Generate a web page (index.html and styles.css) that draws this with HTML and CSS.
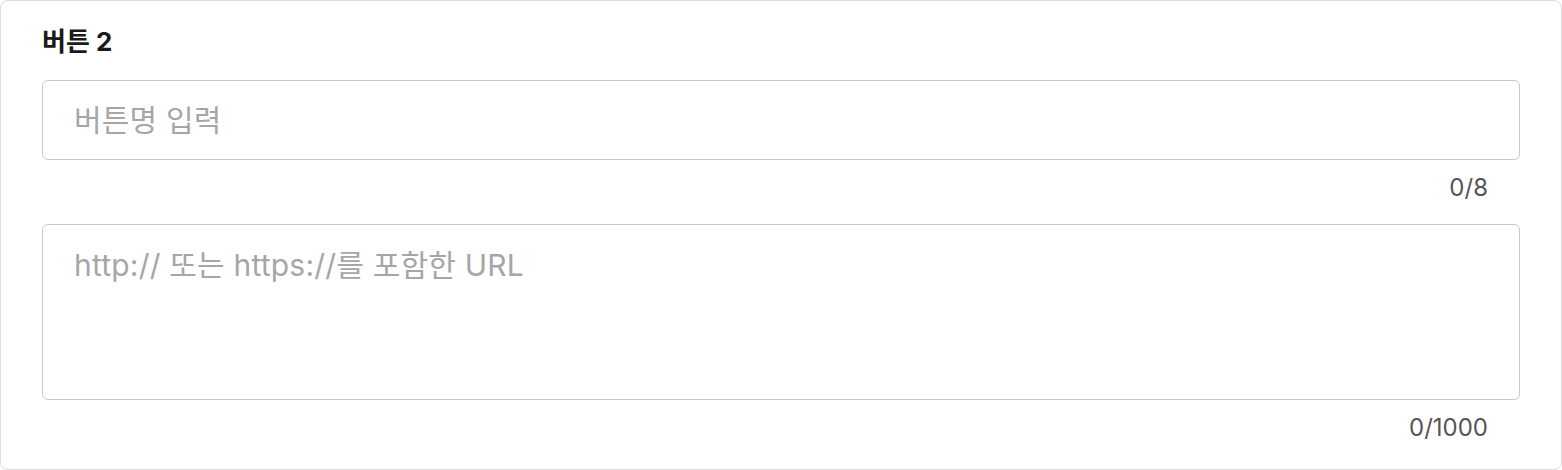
FILE: index.html
```html
<!DOCTYPE html>
<html lang="ko">
<head>
<meta charset="utf-8">
<link rel="stylesheet" href="styles.css">
</head>
<body>
<div class="card">
  <div class="title">버튼 2</div>
  <input class="field" type="text" placeholder="버튼명 입력">
  <div class="counter">0/8</div>
  <textarea class="field area" placeholder="http:// 또는 https://를 포함한 URL"></textarea>
  <div class="counter">0/1000</div>
</div>
</body>
</html>
```

FILE: styles.css
```css
html, body {
  margin: 0;
  padding: 0;
  background: #fff;
}
body {
  font-family: Inter, "Noto Sans CJK KR", sans-serif;
}
.card {
  box-sizing: border-box;
  width: 1562px;
  height: 470px;
  border: 1px solid #dcdcdc;
  border-radius: 8px;
  padding: 25px 41px 0 41px;
  display: flex;
  flex-direction: column;
}
.title {
  font-size: 26px;
  font-weight: 700;
  line-height: 32px;
  color: #1a1a1a;
}
.field {
  box-sizing: border-box;
  width: 100%;
  margin: 22px 0 0 0;
  border: 1.5px solid #c8c8c8;
  border-radius: 6px;
  background: #fff;
  font-family: Inter, "Noto Sans CJK KR", sans-serif;
  font-size: 30px;
  color: #222;
  padding: 0 31px;
  outline: none;
  letter-spacing: 0.2px;
}
input.field {
  height: 80px;
  line-height: 40px;
}
.area {
  height: 176px;
  resize: none;
  padding-top: 20px;
  line-height: 40px;
  display: block;
}
.field::placeholder {
  color: #a6a6a6;
}
.counter {
  margin-top: 14px;
  text-align: right;
  padding-right: 32px;
  font-size: 24px;
  line-height: 28px;
  color: #555;
}
```
